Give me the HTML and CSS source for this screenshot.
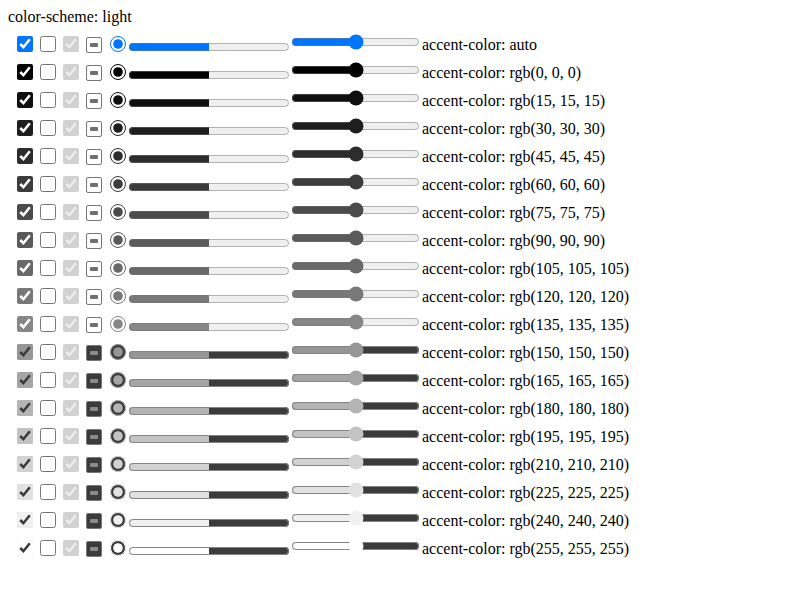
FILE: index.html
```html
<!DOCTYPE html>
<html>
<head>
<meta charset="UTF-8">
<title>accent-color</title>
<link rel="stylesheet" href="styles.css">
</head>
<body>
<div class="scheme">color-scheme: light</div>
<div id="rows"></div>
<script src="script.js"></script>
</body>
</html>
```
FILE: styles.css
```css
body {
    font-family: "Liberation Serif", "Times New Roman", serif;
    font-size: 16px;
    color-scheme: light;
}
.row {
    box-sizing: border-box;
    height: 28px;
    white-space: nowrap;
    padding-left: 5px;
    padding-top: 6px;
}
.row input[type="checkbox"],
.row input[type="radio"] {
    width: 16px;
    height: 16px;
    vertical-align: -2px;
}
.row progress {
    vertical-align: -5px;
}
.row input.ind {
    appearance: none;
    -webkit-appearance: none;
    box-sizing: border-box;
    border: 1px solid #767676;
    border-radius: 2px;
    background: #fff;
    position: relative;
    vertical-align: -6px;
}
.row input.ind::after {
    content: "";
    position: absolute;
    left: 3px;
    top: 5px;
    width: 8px;
    height: 4px;
    border-radius: 1px;
    background: #6e6e6e;
}
.row.dark input.ind {
    background: #3b3b3b;
}
.row.dark input.ind::after {
    background: #8c8c8c;
}
```
FILE: script.js
```js
var rows = document.getElementById('rows');
var colors = [['auto', 0]];
for (var v = 0; v <= 255; v += 15) {
    colors.push(['rgb(' + v + ', ' + v + ', ' + v + ')', v]);
}
colors.forEach(function (c) {
    var row = document.createElement('div');
    row.className = c[1] >= 150 ? 'row dark' : 'row';
    row.style.accentColor = c[0];
    row.innerHTML =
        '<input type="checkbox" checked>' +
        '<input type="checkbox">' +
        '<input type="checkbox" checked disabled>' +
        '<input type="checkbox" class="ind">' +
        '<input type="radio" checked>' +
        '<progress value="50" max="100"></progress>' +
        '<input type="range">' +
        'accent-color: ' + c[0];
    row.querySelector('.ind').indeterminate = true;
    rows.appendChild(row);
});
```
